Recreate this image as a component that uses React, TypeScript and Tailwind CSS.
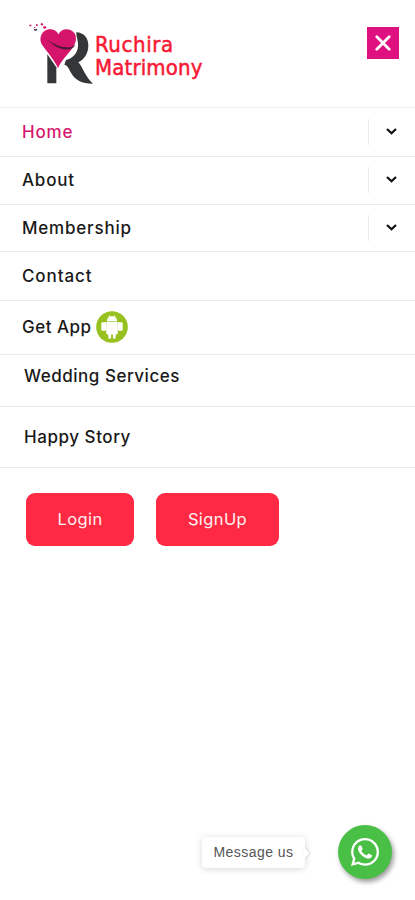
import { FaWhatsapp } from "react-icons/fa";

type MenuItem = {
  label: string;
  row: string;
  text: string;
  expandable?: boolean;
  android?: boolean;
};

const menu: MenuItem[] = [
  { label: "Home", row: "h-[49px] pl-[22px]", text: "text-[#d6186f] tracking-[0.8px]", expandable: true },
  { label: "About", row: "h-12 pl-[22px] pb-px", text: "tracking-[0.8px]", expandable: true },
  { label: "Membership", row: "h-[47px] pl-[22px]", text: "tracking-[0.8px]", expandable: true },
  { label: "Contact", row: "h-[49px] pl-[22px]", text: "tracking-[0.9px]" },
  { label: "Get App", row: "h-[54px] pl-[22px] pb-px", text: "tracking-[0.5px]", android: true },
  { label: "Wedding Services", row: "h-[52px] pb-[9px] pl-6", text: "tracking-[0.52px]" },
  { label: "Happy Story", row: "h-[61px] pl-6", text: "tracking-[0.55px]" },
];

function Logo() {
  return (
    <div className="flex items-start">
      <svg className="h-[63px] w-[68px]" viewBox="36 36 204 189" fill="none">
        <path d="M97 133L124 172V220H97Z" fill="#343637" />
        <path
          d="M184 67C207 68 220 84 220 107C220 131 207 149 190 157C202 169 211 201 234 221C199 221 181 211 169 190C162 178 160 168 148 164L153 150C173 145 188 130 189 108C190 91 183 79 184 67Z"
          fill="#343637"
        />
        <path
          d="M129 174C117 148 96 126 80 103C71 86 79 62 101 58C115 56 126 63 130 73C137 60 153 54 168 61C188 71 186 95 174 112C158 135 141 149 129 174Z"
          fill="#d5146b"
        />
        <path d="M82 80C104 93 126 111 155 112C166 113 175 109 181 105C175 116 161 121 146 118C119 113 103 91 82 80Z" fill="#4b1838" />
        <path d="M43 44h6v5h-6zM63 43h5v5h-5zM78 39l7 2-2 6-6-2zM83 51l8-3 4 5-7 4zM57 51h4v3h-4z" fill="#d5146b" />
        <path d="M55 56l5 2 7-2-2 6h-6z" fill="#343637" />
      </svg>
      <div className="mt-[11px] font-['DejaVu_Sans_Condensed','DejaVu_Sans',sans-serif] text-[22px] leading-[23px] font-stretch-condensed text-[#f71935] [-webkit-text-stroke:0.5px_#f71935]">
        <div className="tracking-[0.6px]">Ruchira</div>
        <div className="tracking-[0.15px]">Matrimony</div>
      </div>
    </div>
  );
}

function AndroidBadge() {
  return (
    <svg className="ml-1 size-8" viewBox="0 0 32 32">
      <circle cx="16" cy="16" r="15.8" fill="#97c11f" />
      <g fill="#fff">
        <path d="M11 10.6c-.1-2.8 1-4.3 2.3-5l-.5-1 .6-.3.8 1.2c1.2-.3 2.4-.3 3.6 0l.8-1.2.6.3-.5 1c1.3.7 2.4 2.2 2.3 5z" />
        <path d="M10.3 10.8h11.4v11.4c0 .8-.5 1.2-1.2 1.2h-.8v3.2a1.4 1.4 0 0 1-2.8 0v-3.2h-1.8v3.2a1.4 1.4 0 0 1-2.8 0v-3.2h-.8c-.7 0-1.2-.4-1.2-1.2z" />
        <rect x="5.3" y="11.3" width="5.1" height="8.4" rx="1.3" />
        <rect x="21.6" y="11.3" width="5.1" height="8.4" rx="1.3" />
      </g>
      <path d="M13.2 8h1M17.8 8h1M12 10.6h8" stroke="#97c11f" strokeWidth=".5" />
    </svg>
  );
}

export default function App() {
  return (
    <div className="flex h-[900px] w-full flex-col bg-white font-[Inter,sans-serif] text-[#191919]">
      <header className="flex h-[107px] items-start justify-between pt-[22px] pr-4 pl-[27px]">
        <Logo />
        <button aria-label="Close menu" className="mt-[5px] flex size-8 items-center justify-center bg-[#df1180]">
          <svg className="size-4" viewBox="0 0 16 16" stroke="#fff" strokeWidth="2.8" strokeLinecap="round">
            <path d="M1.8 1.8l12.4 12.4M14.2 1.8L1.8 14.2" />
          </svg>
        </button>
      </header>

      <nav className="border-t border-[#efefef]">
        {menu.map((item) => (
          <div key={item.label} className={`flex items-center border-b border-[#ebebeb] ${item.row}`}>
            <span className={`-mt-px text-[17px] leading-6 font-medium whitespace-nowrap ${item.text}`}>{item.label}</span>
            {item.android && <AndroidBadge />}
            {item.expandable && (
              <div className="ml-auto flex h-[26px] w-[47px] items-center justify-center border-l border-[#ececec] pr-px">
                <svg className="-mt-px h-[7px] w-[11px]" viewBox="0 0 11 7" fill="none" stroke="#111" strokeWidth="2.2">
                  <path d="M1 1l4.5 4.3L10 1" />
                </svg>
              </div>
            )}
          </div>
        ))}
      </nav>

      <div className="mt-[25px] flex gap-[22px] pl-[26px] text-[16.5px] text-[#fff0f1]">
        <button className="h-[53px] w-[108px] rounded-[9px] bg-[#ff2943] pb-px tracking-[0.4px]">Login</button>
        <button className="h-[53px] w-[123px] rounded-[9px] bg-[#ff2943] pb-px tracking-[0.4px]">SignUp</button>
      </div>

      <div className="mt-auto mb-[21px] flex items-center justify-end pr-[23px]">
        <div className="relative mr-[33px] flex h-[31px] w-[103px] items-center justify-center rounded-[4px] bg-white font-['Liberation_Sans',sans-serif] text-sm tracking-[0.45px] text-[#555] shadow-[0_1px_7px_rgba(0,0,0,0.16)]">
          Message us
          <svg className="absolute top-[10px] -right-[5px] h-3 w-[6px] drop-shadow-[1px_0_1px_rgba(0,0,0,0.15)]" viewBox="0 0 6 12">
            <path d="M0 0l5.5 6L0 12z" fill="#fff" />
          </svg>
        </div>
        <div className="flex size-[54px] items-center justify-center rounded-full bg-[#49bf45] shadow-[2px_3px_5px_rgba(0,0,0,0.4)]">
          <FaWhatsapp className="size-8 text-white" />
        </div>
      </div>
    </div>
  );
}
